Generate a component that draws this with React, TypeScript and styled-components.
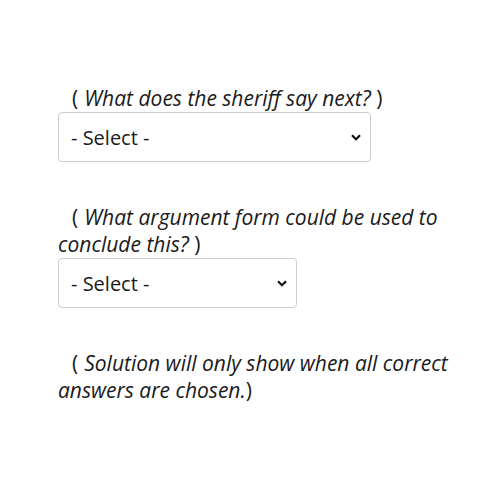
import React from "react";
import styled, { createGlobalStyle } from "styled-components";

const Global = createGlobalStyle`
  body {
    margin: 0;
    background: #ffffff;
    font-family: "Open Sans", "Noto Sans", sans-serif;
    color: #1a1a1a;
  }
`;

const chevron =
  "data:image/svg+xml;utf8," +
  encodeURIComponent(
    '<svg xmlns="http://www.w3.org/2000/svg" width="10" height="7" viewBox="0 0 10 7"><path d="M1 1.3 L5 5.2 L9 1.3" fill="none" stroke="#111" stroke-width="2.2"/></svg>'
  );

const Page = styled.div`
  padding: 85px 0 0 58px;
  width: 400px;
  display: flex;
  flex-direction: column;
  gap: 42px;
`;

const Question = styled.div`
  display: flex;
  flex-direction: column;
  align-items: flex-start;
`;

const Prompt = styled.p`
  margin: 0;
  font-size: 21px;
  line-height: 27px;
  text-indent: 14px;
`;

const Paren = styled.span`
  margin-right: 6px;
`;

const Em = styled.em`
  font-style: italic;
`;

const Select = styled.select<{ $w: number }>`
  appearance: none;
  -webkit-appearance: none;
  width: ${(p) => p.$w}px;
  height: 50px;
  font-family: "Open Sans", "Noto Sans", sans-serif;
  font-size: 20px;
  color: #1a1a1a;
  background: #fff url("${chevron}") no-repeat right 9px center;
  background-size: 10px 7px;
  border: 1px solid #cccccc;
  border-radius: 4px;
  padding: 0 12px;
`;

export default function App() {
  return (
    <>
      <Global />
      <Page>
        <Question>
          <Prompt>
            <Paren>(</Paren>
            <Em>What does the sheriff say next?</Em>
            {" )"}
          </Prompt>
          <Select $w={313} defaultValue="">
            <option value="">- Select -</option>
          </Select>
        </Question>
        <Question>
          <Prompt>
            <Paren>(</Paren>
            <Em>What argument form could be used to conclude this?</Em>
            {" )"}
          </Prompt>
          <Select $w={239} defaultValue="">
            <option value="">- Select -</option>
          </Select>
        </Question>
        <Question>
          <Prompt>
            <Paren>(</Paren>
            <Em>Solution will only show when all correct answers are chosen.</Em>
            {")"}
          </Prompt>
        </Question>
      </Page>
    </>
  );
}
